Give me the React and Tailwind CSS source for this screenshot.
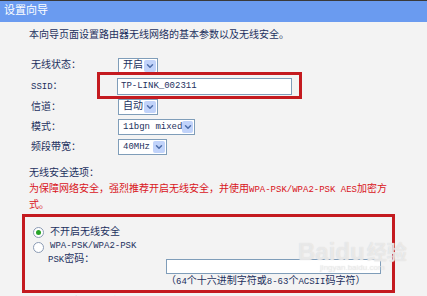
import { ChevronDown } from 'lucide-react'

function Select({ value, width }) {
  return (
    <div className={`flex h-[16px] items-center border border-[#7f9db9] bg-white ${width}`}>
      <span className="flex-1 whitespace-nowrap pl-[4px] leading-none">{value}</span>
      <span className="mr-px flex h-[12px] w-[12px] items-center justify-center rounded-[2px] bg-[#c1d3fa] text-[#4d6ca8]">
        <ChevronDown size={10} strokeWidth={3.5} />
      </span>
    </div>
  )
}

function Radio({ checked }) {
  return (
    <span className="flex h-[11px] w-[11px] items-center justify-center rounded-full border border-[#8b9bb4] bg-white">
      {checked && <span className="h-[5px] w-[5px] rounded-full bg-[#27a327]" />}
    </span>
  )
}

function Row({ label, h, children }) {
  return (
    <div className={`relative flex items-center ${h}`}>
      <div className="w-[87px] whitespace-nowrap">{label}</div>
      {children}
    </div>
  )
}

export default function App() {
  return (
    <div className="relative h-[296px] w-[427px] overflow-hidden bg-[#f3f3f3] font-['Liberation_Mono','Noto_Sans_CJK_SC',monospace] text-[10px] text-[#1d3160]">
      <div className="h-px bg-[#3a3a3a]" />
      <div className="flex h-[21px] items-center bg-[#6a9bf0] pl-[4px] text-[11px] text-white">设置向导</div>

      <div className="pl-[22px]">
        <p className="mt-[8px] pl-[7px] leading-[12px]">本向导页面设置路由器无线网络的基本参数以及无线安全。</p>

        {/* Basic settings */}
        <div className="mt-[13px] pl-[9px]">
          <Row label="无线状态：" h="h-[21px]">
            <Select value="开启" width="w-[40px]" />
          </Row>
          <Row label={<><span className="text-[9px]">SSID</span>：</>} h="h-[21px]">
            <div className="ml-[-1px] flex h-[17px] w-[175px] items-center border border-[#7f9db9] bg-white pl-[3px] text-[9px]">
              TP-LINK_002311
            </div>
            <div className="pointer-events-none absolute left-[66px] top-[-4px] h-[27px] w-[205px] border-[3px] border-[#c41a1f]" />
          </Row>
          <Row label="信道：" h="h-[20px]">
            <Select value="自动" width="w-[40px]" />
          </Row>
          <Row label="模式：" h="h-[20px]">
            <Select value={<span className="text-[9px]">11bgn mixed</span>} width="w-[77px]" />
          </Row>
          <Row label="频段带宽：" h="h-[20px]">
            <Select value={<span className="text-[9px]">40MHz</span>} width="w-[49px]" />
          </Row>
        </div>

        {/* Security */}
        <p className="mt-[11px] pl-[7px] leading-[12px]">无线安全选项：</p>
        <p className="mt-[2px] whitespace-nowrap pl-[7px] leading-[15px] text-[#d9141b]">
          为保障网络安全，强烈推荐开启无线安全，并使用<span className="text-[9px]">WPA-PSK/WPA2-PSK AES</span>加密方
          <br />
          式。
        </p>

        <div className="mt-px w-[373px] border-[3px] border-[#c41a1f] pb-[2px] pt-[8px]">
          <div className="flex h-[15px] items-center">
            <div className="w-[25px] pl-[8px]"><Radio checked /></div>
            <span>不开启无线安全</span>
          </div>
          <div className="flex h-[14px] items-center">
            <div className="w-[25px] pl-[8px]"><Radio /></div>
            <span className="text-[9px]">WPA-PSK/WPA2-PSK</span>
          </div>
          <div className="flex h-[20px] items-start">
            <div className="w-[141px] pl-[23px] leading-[12px]"><span className="text-[9px]">PSK</span>密码：</div>
            <div className="mt-[5px] h-[15px] w-[215px] border border-[#7f9db9] bg-white" />
          </div>
          <p className="mt-[2px] whitespace-nowrap pl-[141px] leading-[12px]">
            （<span className="text-[9px]">64</span>个十六进制字符或<span className="text-[9px]">8-63</span>个<span className="text-[9px]">ACSII</span>码字符）
          </p>
        </div>

        <div className="mt-[2px] flex h-[15px] items-center">
          <div className="w-[28px] pl-[11px]"><Radio /></div>
          <span>不修改无线安全设置</span>
        </div>
      </div>

      {/* watermark */}
      <div className="pointer-events-none absolute left-[298px] top-[240px] flex flex-col items-center text-white/50 [text-shadow:0_0_1px_#d0d0d0]">
        <div className="flex items-baseline font-['Liberation_Sans','Noto_Sans_CJK_SC',sans-serif] text-[24px] font-bold leading-none">
          Baidu<span className="ml-[2px] text-[20px]">经验</span>
        </div>
        <div className="font-['Liberation_Sans',sans-serif] text-[8px] leading-none text-white/40">jingyan.baidu.com</div>
      </div>
    </div>
  )
}
